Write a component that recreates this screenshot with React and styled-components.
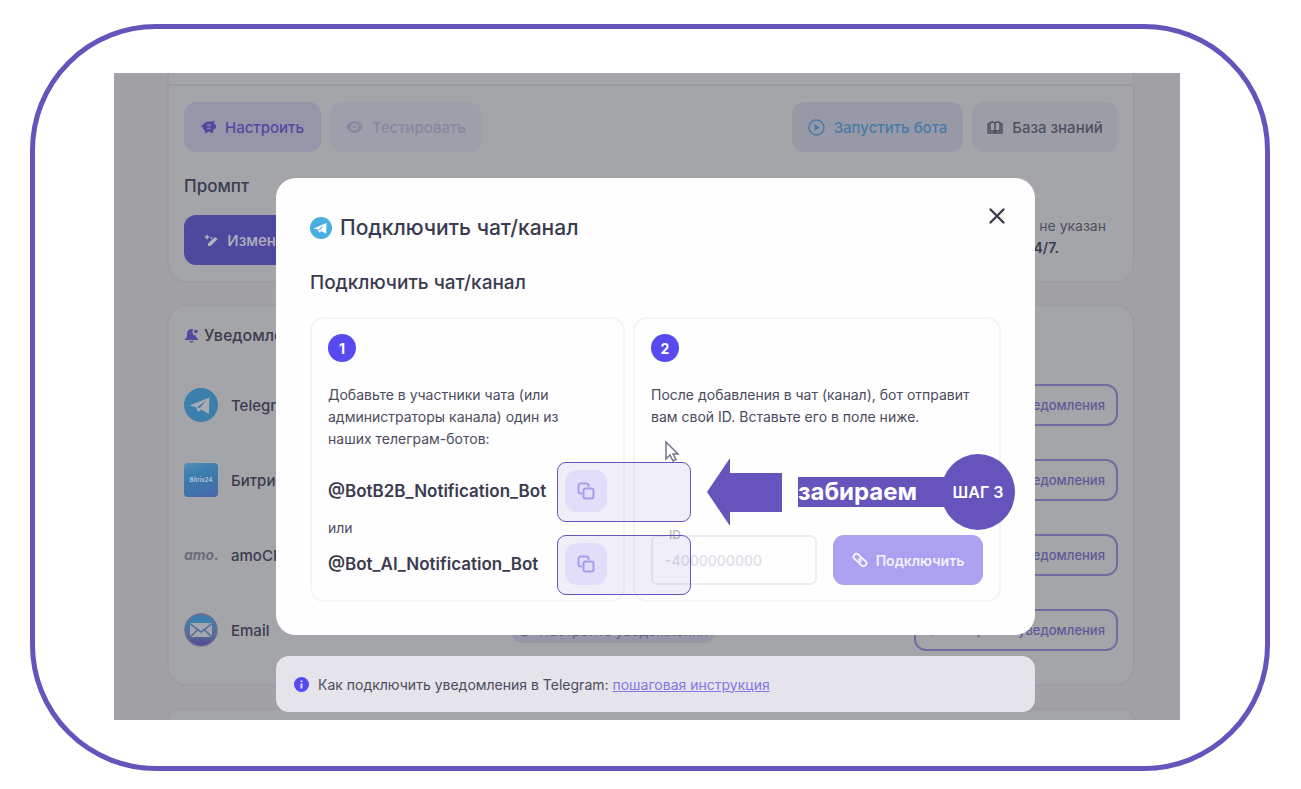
import React from 'react';
import styled, { createGlobalStyle } from 'styled-components';

const GlobalStyle = createGlobalStyle`
  * {
    box-sizing: border-box;
  }
  body {
    margin: 0;
    background: #fff;
    font-family: Inter, 'Noto Sans', sans-serif;
    color: #3b3b4f;
  }
  button,
  input {
    font-family: inherit;
  }
  h1,
  h2,
  h3,
  p {
    margin: 0;
  }
`;

const Page = styled.div`
  display: flex;
  min-height: 100vh;
  padding: 24px 31px 18px 30px;
`;

const Frame = styled.div`
  display: flex;
  flex: 1;
  padding: 44px 85px 46px 79px;
  border: 5px solid #6654bc;
  border-radius: 126px;
`;

const Stage = styled.main`
  position: relative;
  flex: 1;
  padding: 0 45px 0 53px;
  background: #a2a1a6;
  overflow: hidden;
`;

// page under the dialog
const Panel = styled.section`
  border: 2px solid #9d9da6;
  border-radius: 20px;
  background: #a4a5a9;
`;

const SettingsPanel = styled(Panel)`
  height: 210px;
  border-top: 0;
  border-top-left-radius: 0;
  border-top-right-radius: 0;
`;

const PanelEdge = styled.div`
  height: 13px;
  border-bottom: 2px solid #9a9ba0;
`;

const SettingsBody = styled.div`
  padding: 16px 15px;
`;

const Toolbar = styled.div`
  display: flex;
  gap: 9px;
`;

const Spacer = styled.div`
  flex: 1;
`;

const ToolButton = styled.button`
  display: flex;
  align-items: center;
  justify-content: center;
  gap: 9px;
  width: ${(p) => p.$width};
  height: 50px;
  padding: 0;
  border: 0;
  border-radius: 12px;
  background: ${(p) => p.$bg};
  color: ${(p) => p.$color};
  font-size: 15px;
  font-weight: 500;
  white-space: nowrap;
`;

const PromptTitle = styled.h2`
  margin: 22px 0 16px;
  font-size: 17px;
  line-height: 25px;
  font-weight: 500;
`;

const PromptRow = styled.div`
  display: flex;
  justify-content: space-between;
`;

const Schedule = styled.p`
  padding-right: 12px;
  font-size: 14px;
  line-height: 22px;
  color: #4f4f60;

  b {
    display: block;
    font-weight: 600;
    color: #3b3b4f;
  }
`;

const NotifyPanel = styled(Panel)`
  margin-top: 21px;
  height: 382px;
  padding: 17px 15px;
`;

const NotifyTitle = styled.h2`
  display: flex;
  align-items: center;
  gap: 5px;
  margin-bottom: 37px;
  font-size: 16px;
  line-height: 24px;
  font-weight: 500;
`;

const NotifyRow = styled.div`
  display: flex;
  align-items: center;
  height: 42px;
  margin-bottom: 33px;
`;

const RowIcon = styled.span`
  display: flex;
  width: 34px;
  margin-right: 13px;
`;

const RowName = styled.span`
  width: 279px;
  font-size: 15px;
  font-weight: 500;
`;

const StatusPill = styled.span`
  display: flex;
  align-items: center;
  justify-content: center;
  gap: 8px;
  width: 206px;
  height: 26px;
  border-radius: 13px;
  background: #9596a8;
  color: #5f6080;
  font-size: 14px;
  white-space: nowrap;
`;

const NotifyButton = styled.button`
  display: flex;
  align-items: center;
  justify-content: flex-end;
  gap: 8px;
  width: 204px;
  height: 42px;
  margin-left: auto;
  padding: 0 11px;
  border: 2px solid #6f6c9f;
  border-radius: 12px;
  background: transparent;
  color: #5d5a96;
  font-size: 13px;
  font-weight: 500;
  white-space: nowrap;
`;

const AmoLogo = styled.span`
  color: #6b6d78;
  font-size: 14px;
  font-style: italic;
  font-weight: 700;
  line-height: 14px;
`;

const BitrixLogo = styled.span`
  width: 34px;
  height: 34px;
  border-radius: 4px;
  background: linear-gradient(160deg, #5c8fb2 0%, #3c7eb0 30%, #4173ab 70%, #4a62ab 100%);
  color: #a9bfd2;
  font-size: 6px;
  font-weight: 700;
  line-height: 34px;
  text-align: center;
`;

const NextPanel = styled(Panel)`
  height: 12px;
  margin-top: 22px;
  border-bottom: 0;
  border-bottom-left-radius: 0;
  border-bottom-right-radius: 0;
`;

// dialog
const Overlay = styled.div`
  position: absolute;
  inset: 0;
  padding: 105px 145px 0 162px;
`;

const Dialog = styled.section`
  height: 457px;
  padding: 34px;
  border-radius: 20px;
  background: #fefefe;
`;

const DialogHeader = styled.header`
  display: flex;
  align-items: center;
  gap: 8px;
  height: 32px;
`;

const DialogTitle = styled.h1`
  font-size: 21px;
  line-height: 32px;
  font-weight: 500;
`;

const CloseButton = styled.button`
  display: flex;
  align-self: flex-start;
  margin: -12px -12px 0 auto;
  padding: 4px;
  border: 0;
  background: transparent;
  color: #3b3b4f;
`;

const DialogSubtitle = styled.h2`
  margin: 27px 0 22px;
  font-size: 19px;
  line-height: 24px;
  font-weight: 500;
`;

const Steps = styled.div`
  display: grid;
  grid-template-columns: 315fr 368fr;
  gap: 8px;
`;

const StepCard = styled.div`
  position: relative;
  display: flex;
  flex-direction: column;
  height: 285px;
  padding: 15px 16px;
  border: 2px solid #f3f3f8;
  border-radius: 14px;
`;

const StepNumber = styled.span`
  display: flex;
  align-items: center;
  justify-content: center;
  width: 28px;
  height: 28px;
  margin-bottom: 22px;
  border-radius: 50%;
  background: #574aee;
  color: #fff;
  font-size: 14px;
  font-weight: 700;
`;

const StepText = styled.p`
  font-size: 14px;
  line-height: 22px;
  color: #4b4b5c;
`;

const BotList = styled.div`
  margin-top: 20px;
`;

const BotRow = styled.div`
  display: flex;
  align-items: center;
  justify-content: space-between;
  font-size: 17px;
  font-weight: 600;
  white-space: nowrap;
`;

const Or = styled.p`
  margin: 4px 0;
  font-size: 14px;
  line-height: 23px;
  color: #4b4b5c;
`;

const CopySlot = styled.div`
  position: relative;
  z-index: 2;
`;

const CopyButton = styled.button`
  display: flex;
  align-items: center;
  justify-content: center;
  width: 42px;
  height: 42px;
  padding: 0;
  border: 0;
  border-radius: 12px;
  background: #efecff;
  color: #aca3f2;
`;

const Highlight = styled.span`
  position: absolute;
  inset: -8px -84px -10px -8px;
  border: 1px solid #6654bc;
  border-radius: 9px;
  background: rgba(102, 84, 188, 0.09);
  pointer-events: none;
`;

const ConnectForm = styled.form`
  display: grid;
  grid-template-columns: 1fr 150px;
  gap: 16px;
  margin-top: auto;
`;

const Field = styled.div`
  position: relative;
`;

const FieldLabel = styled.label`
  position: absolute;
  top: -7px;
  left: 14px;
  padding: 0 4px;
  background: #fefefe;
  color: #b5b5c0;
  font-size: 12px;
  line-height: 14px;
  font-weight: 500;
`;

const FieldInput = styled.input`
  width: 100%;
  height: 50px;
  padding: 0 12px;
  border: 2px solid #ececf3;
  border-radius: 6px;
  background: transparent;
  font-size: 14px;
  font-weight: 500;

  &::placeholder {
    color: #dedde6;
    opacity: 1;
  }
`;

const ConnectButton = styled.button`
  display: flex;
  align-items: center;
  justify-content: center;
  gap: 8px;
  height: 50px;
  padding: 0;
  border: 0;
  border-radius: 11px;
  background: #aba1f0;
  color: #f3f1fe;
  font-size: 14px;
  font-weight: 600;
`;

const InfoBar = styled.aside`
  display: flex;
  align-items: center;
  gap: 9px;
  height: 56px;
  margin-top: 21px;
  padding: 0 18px;
  border-radius: 13px;
  background: #e4e4ea;
  color: #4b4b5c;
  font-size: 14px;

  a {
    color: #8577e6;
  }
`;

// tutorial marks drawn over the dialog
const Callout = styled.div`
  position: absolute;
  z-index: 3;
  top: 135px;
  left: 72px;
  display: flex;
  align-items: center;
`;

const CalloutText = styled.strong`
  width: 152px;
  margin-left: 16px;
  background: #6654bc;
  color: #fff;
  font-size: 24px;
  line-height: 30px;
  font-weight: 700;
`;

const CalloutStep = styled.span`
  display: flex;
  align-items: center;
  justify-content: center;
  width: 74px;
  height: 76px;
  margin-left: -9px;
  border-radius: 50%;
  background: #6654bc;
  color: #fff;
  font-size: 16px;
  font-weight: 600;
`;

const Pointer = styled.svg`
  position: absolute;
  top: 121px;
  left: 29px;
`;

const TelegramIcon = ({ size, disc, plane }) => (
  <svg width={size} height={size} viewBox="0 0 34 34">
    <circle cx="17" cy="17" r="17" fill={disc} />
    <path d="M5.5 17.6 25.5 9.4l-.6 16.6-7.600-4.400-3.200 2.700-1.800-5z" fill={plane} />
    <path d="m13.500 19 8.600-6.500-6.800 8z" fill={disc} />
  </svg>
);

const EmailIcon = () => (
  <svg width="34" height="34" viewBox="0 0 34 34">
    <defs>
      <linearGradient id="mail" x1="0" y1="0" x2="0" y2="1">
        <stop offset="0.2" stopColor="#3d7fae" />
        <stop offset="0.65" stopColor="#5a6a94" />
        <stop offset="1" stopColor="#50479a" />
      </linearGradient>
    </defs>
    <circle cx="17" cy="17" r="16" fill="url(#mail)" stroke="#6a6c90" strokeWidth="1.500" />
    <rect x="6" y="10" width="22" height="14" rx="1.5" fill="#a4a5ae" />
    <path d="m6.500 11 10.500 8 10.500-8M6.500 23.500l7.500-7M27.500 23.500l-7.500-7" fill="none" stroke="#4b6a93" strokeWidth="1.500" />
  </svg>
);

const PigIcon = () => (
  <svg width="15" height="14" viewBox="0 0 16 15" fill="currentColor">
    <path d="M5 2.500C7 1.300 9.300 1.400 11 2L14 .5v3l.8 1.500H16v4.500h-1.700L13 11v3h-2.500l-.5-1.500H7L6.500 14H4v-2.600C2.600 10.500 2 9 2 8 .8 7.800 0 7 0 5.600h2C2.500 4 3.500 3.100 5 2.500z" />
    <path d="M6.500 5.500h4M6.500 8.800h4" stroke="#9596ab" strokeWidth="1.200" />
  </svg>
);

const EyeIcon = () => (
  <svg width="17" height="12" viewBox="0 0 17 12">
    <path d="M0 6c2-4 5-6 8.500-6S15 2 17 6c-2 4-5 6-8.500 6S2 10 0 6z" fill="currentColor" />
    <circle cx="8.500" cy="6" r="3.600" fill="#9f9fac" />
    <circle cx="8.500" cy="6" r="1.800" fill="currentColor" />
  </svg>
);

const PlayIcon = () => (
  <svg width="17" height="17" viewBox="0 0 17 17">
    <circle cx="8.500" cy="8.500" r="7.500" fill="none" stroke="currentColor" strokeWidth="1.400" />
    <path d="m6.500 5 5.500 3.500L6.500 12z" fill="currentColor" />
  </svg>
);

const BookIcon = () => (
  <svg width="16" height="13" viewBox="0 0 16 13" fill="none" stroke="currentColor" strokeWidth="1.500">
    <path d="M8 2C6.500.8 4.500.8 3 1.500V10c1.700-.5 3.500-.3 5 1 1.500-1.300 3.300-1.500 5-1V1.500C11.500.8 9.500.8 8 2zM8 2v9M3 3H1v9h14V3h-2" />
  </svg>
);

const WandIcon = () => (
  <svg width="14" height="14" viewBox="0 0 14 14" fill="currentColor">
    <path d="m11 4 2.500 2.200L6.500 13H4v-2.500zM3 1l1 2.200L6.200 4 4 5 3 7 2 5 0 4l2-.8zM7.500 3.500l.5 1 1 .5-1 .5-.5 1-.5-1-1-.5 1-.5z" />
  </svg>
);

const BellIcon = () => (
  <svg width="15" height="15" viewBox="0 0 15 15" fill="#514a9f">
    <path d="M7.500 1C5 1 3 3 3 5.500V9l-2 2v1h13v-1l-2-2V7.500A3.500 3.500 0 0 1 8.500 4c0-1.200.3-2 1-2.700zM5.500 13h4c-.5 2-3.500 2-4 0z" />
    <circle cx="12" cy="3.500" r="1.800" />
  </svg>
);

const CopyIcon = () => (
  <svg width="18" height="18" viewBox="0 0 18 18" fill="none" stroke="currentColor" strokeWidth="2">
    <rect x="6.500" y="6.500" width="10" height="10" rx="2" />
    <path d="M5 11.500H3.500a2 2 0 0 1-2-2v-6a2 2 0 0 1 2-2h6a2 2 0 0 1 2 2V5" />
  </svg>
);

const LinkIcon = () => (
  <svg width="16" height="16" viewBox="0 0 16 16" fill="none" stroke="currentColor" strokeWidth="2" strokeLinecap="round">
    <path d="M9.500 6 6.800 2.800a3 3 0 0 0-4.500 0 3 3 0 0 0 .3 4.200L5 9c1.200.9 2.800.8 3.800-.4" />
    <path d="m6.500 10 2.700 3.200a3 3 0 0 0 4.500 0 3 3 0 0 0-.3-4.200L11 7c-1.200-.9-2.800-.8-3.800.4" />
  </svg>
);

const CloseIcon = () => (
  <svg width="24" height="24" viewBox="0 0 24 24" stroke="currentColor" strokeWidth="2.400" strokeLinecap="round">
    <path d="M5.500 5.500l13 13M18.500 5.500l-13 13" />
  </svg>
);

const InfoIcon = () => (
  <svg width="15" height="15" viewBox="0 0 15 15">
    <circle cx="7.500" cy="7.500" r="7.500" fill="#574aee" />
    <path d="M7.500 6.500v5M7.500 3.500v1.500" stroke="#dcd9fb" strokeWidth="2" />
  </svg>
);

const SmallDot = () => (
  <svg width="13" height="13" viewBox="0 0 13 13" fill="none" stroke="currentColor" strokeWidth="2">
    <circle cx="6.500" cy="6.500" r="5" />
    <circle cx="6.500" cy="6.500" r="1.500" />
  </svg>
);

const channels = [
  { name: 'Telegram', icon: <TelegramIcon size={34} disc="#3c7eac" plane="#a9abb4" /> },
  { name: 'Битрикс24', icon: <BitrixLogo>Bitrix24</BitrixLogo> },
  { name: 'amoCRM', icon: <AmoLogo>amo.</AmoLogo> },
  { name: 'Email', icon: <EmailIcon />, status: 'Настройте уведомления' },
];

const Bot = ({ name }) => (
  <BotRow>
    {name}
    <CopySlot>
      <CopyButton type="button" aria-label={`Скопировать ${name}`}>
        <CopyIcon />
      </CopyButton>
      <Highlight />
    </CopySlot>
  </BotRow>
);

const Settings = () => (
  <SettingsPanel>
    <PanelEdge />
    <SettingsBody>
      <Toolbar>
        <ToolButton $width="137px" $bg="#9596aa" $color="#514a9f">
          <PigIcon />
          Настроить
        </ToolButton>
        <ToolButton $width="152px" $bg="#9f9fac" $color="#858a9f">
          <EyeIcon />
          Тестировать
        </ToolButton>
        <Spacer />
        <ToolButton $width="171px" $bg="#979aa6" $color="#4a7aa5">
          <PlayIcon />
          Запустить бота
        </ToolButton>
        <ToolButton $width="146px" $bg="#9c9ea6" $color="#4f4f60">
          <BookIcon />
          База знаний
        </ToolButton>
      </Toolbar>
      <PromptTitle>Промпт</PromptTitle>
      <PromptRow>
        <ToolButton $width="137px" $bg="#4f489f" $color="#b3b3bd">
          <WandIcon />
          Изменить
        </ToolButton>
        <Schedule>
          График не указан
          <b>Боты 24/7.</b>
        </Schedule>
      </PromptRow>
    </SettingsBody>
  </SettingsPanel>
);

const Notifications = () => (
  <NotifyPanel>
    <NotifyTitle>
      <BellIcon />
      Уведомления
    </NotifyTitle>
    {channels.map(({ name, icon, status }) => (
      <NotifyRow key={name}>
        <RowIcon>{icon}</RowIcon>
        <RowName>{name}</RowName>
        {status && (
          <StatusPill>
            <SmallDot />
            {status}
          </StatusPill>
        )}
        <NotifyButton type="button">
          <SmallDot />
          Настроить уведомления
        </NotifyButton>
      </NotifyRow>
    ))}
  </NotifyPanel>
);

const ConnectDialog = () => (
  <Dialog role="dialog" aria-labelledby="dialog-title">
    <DialogHeader>
      <TelegramIcon size={22} disc="#4aaee0" plane="#fff" />
      <DialogTitle id="dialog-title">Подключить чат/канал</DialogTitle>
      <CloseButton type="button" aria-label="Закрыть">
        <CloseIcon />
      </CloseButton>
    </DialogHeader>
    <DialogSubtitle>Подключить чат/канал</DialogSubtitle>
    <Steps>
      <StepCard>
        <StepNumber>1</StepNumber>
        <StepText>
          Добавьте в участники чата (или
          <br />
          администраторы канала) один из
          <br />
          наших телеграм-ботов:
        </StepText>
        <BotList>
          <Bot name="@BotB2B_Notification_Bot" />
          <Or>или</Or>
          <Bot name="@Bot_AI_Notification_Bot" />
        </BotList>
      </StepCard>
      <StepCard>
        <StepNumber>2</StepNumber>
        <StepText>
          После добавления в чат (канал), бот отправит
          <br />
          вам свой ID. Вставьте его в поле ниже.
        </StepText>
        <ConnectForm>
          <Field>
            <FieldInput id="chat-id" placeholder="-4000000000" />
            <FieldLabel htmlFor="chat-id">ID</FieldLabel>
          </Field>
          <ConnectButton type="button">
            <LinkIcon />
            Подключить
          </ConnectButton>
        </ConnectForm>
        <Pointer width="16" height="24" viewBox="0 0 16 24">
          <path d="M2 2v17l4-4 3 6 3-1.500-3-5.500h5z" fill="#fff" stroke="#77778a" strokeWidth="1.500" />
        </Pointer>
        <Callout>
          <svg width="75" height="68" viewBox="0 0 75 68" fill="#6654bc">
            <path d="M0 34 23 0v15h52v39H23v14z" />
          </svg>
          <CalloutText>забираем</CalloutText>
          <CalloutStep>ШАГ 3</CalloutStep>
        </Callout>
      </StepCard>
    </Steps>
  </Dialog>
);

const App = () => (
  <>
    <GlobalStyle />
    <Page>
      <Frame>
        <Stage>
          <Settings />
          <Notifications />
          <NextPanel />
          <Overlay>
            <ConnectDialog />
            <InfoBar>
              <InfoIcon />
              <span>
                Как подключить уведомления в Telegram: <a href="#guide">пошаговая инструкция</a>
              </span>
            </InfoBar>
          </Overlay>
        </Stage>
      </Frame>
    </Page>
  </>
);

export default App;
